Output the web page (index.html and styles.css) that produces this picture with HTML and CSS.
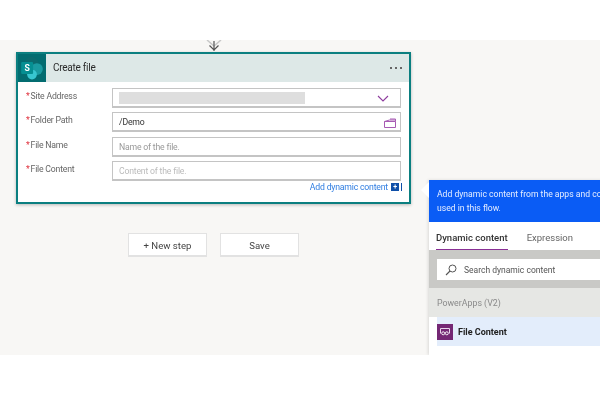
FILE: index.html
```html
<!DOCTYPE html>
<html lang="en">
<head>
<meta charset="utf-8">
<title>Create file</title>
<link rel="stylesheet" href="styles.css">
</head>
<body>
<div class="canvas">
  <svg class="connector" width="16" height="12" viewBox="0 0 16 12"><path d="M1 0l7 6 7-6" fill="none" stroke="#c8c8c8" stroke-width="1.5"/><path d="M8 1v10M3.500 5.500L8 10l4.500-4.500" fill="none" stroke="#555" stroke-width="1.200"/></svg>
  <section class="card">
    <header class="card-head">
      <div class="logo-box">
        <svg width="26" height="26" viewBox="0 0 24 24"><circle cx="11.500" cy="8" r="6.500" fill="#0b6a6e"/><circle cx="16.500" cy="13" r="5.500" fill="#1a9ba1"/><circle cx="12" cy="18" r="4.500" fill="#37c6d0"/><rect x="2" y="6.500" width="11" height="11" rx="1" fill="#058f92"/><text x="7.500" y="15" class="logo-s">S</text></svg>
      </div>
      <div class="card-title">Create file</div>
      <div class="dots"><i></i><i></i><i></i></div>
    </header>
    <div class="form">
      <div class="row">
        <label class="lbl"><b>*</b>Site Address</label>
        <div class="field"><span class="redact"></span>
          <svg class="ico ico-chev" width="12" height="7" viewBox="0 0 12 7"><path d="M1 1l5 5 5-5" fill="none" stroke="#8e3c9e" stroke-width="1.100"/></svg>
        </div>
      </div>
      <div class="row">
        <label class="lbl"><b>*</b>Folder Path</label>
        <div class="field val">/Demo
          <svg class="ico" width="12" height="10" viewBox="0 0 12 10"><path d="M.5 3.500h11v6H.5zM.5 3.500l5-1.500h6v1.500M11.500 2V1H6" fill="none" stroke="#a75bb3" stroke-width="1"/></svg>
        </div>
      </div>
      <div class="row">
        <label class="lbl"><b>*</b>File Name</label>
        <div class="field ph">Name of the file.</div>
      </div>
      <div class="row">
        <label class="lbl"><b>*</b>File Content</label>
        <div class="field ph light">Content of the file.</div>
      </div>
      <div class="add-row">Add dynamic content <span class="plus">+</span></div>
    </div>
  </section>
  <div class="actions">
    <button class="btn">+ New step</button>
    <button class="btn">Save</button>
  </div>
  <aside class="panel">
    <span class="beak"></span>
    <div class="panel-blue">Add dynamic content from the apps and connectors<br>used in this flow.</div>
    <div class="tabs"><span class="tab on">Dynamic content</span><span class="tab">Expression</span></div>
    <div class="search-wrap">
      <div class="search">
        <svg width="12" height="12" viewBox="0 0 12 12"><circle cx="7.500" cy="4.500" r="3.500" fill="none" stroke="#555" stroke-width="1"/><path d="M5 7l-4 4" stroke="#555" stroke-width="1.100"/></svg>
        <span>Search dynamic content</span>
      </div>
    </div>
    <div class="group">PowerApps (V2)</div>
    <div class="item">
      <span class="pa"><svg width="12" height="9" viewBox="0 0 12 9"><path d="M1.500 6.500V1.500h9v5" fill="none" stroke="#e7d3ea" stroke-width="1"/><circle cx="4.200" cy="6.300" r="1.500" fill="none" stroke="#fff" stroke-width=".9"/><circle cx="7.800" cy="6.300" r="1.500" fill="none" stroke="#fff" stroke-width=".9"/></svg></span>
      <span class="item-name">File Content</span>
    </div>
  </aside>
</div>
</body>
</html>
```

FILE: styles.css
```css
html, body { margin: 0; padding: 0; background: #fff; }
body { width: 600px; height: 400px; overflow: hidden; font-family: Roboto, "Open Sans", sans-serif; filter: blur(.35px); }
.canvas { position: relative; height: 315px; margin-top: 40px; background: #f8f7f5; padding: 12px 0 0 16px; box-sizing: border-box; overflow: hidden; }
.connector { position: absolute; left: 206px; top: 0; }
.card { width: 395px; height: 152px; box-sizing: border-box; border: 2px solid #0b7f80; background: #fff; box-shadow: 0 1px 3px rgba(0,0,0,.25); }
.card-head { display: flex; align-items: center; height: 28px; background: #dde8e7; }
.logo-box { width: 28px; height: 28px; background: #036c70; display: flex; align-items: center; justify-content: center; }
.logo-s { font: 700 8px Roboto, sans-serif; fill: #fff; text-anchor: middle; }
.card-title { margin: -1px 0 0 7px; font-size: 10px; letter-spacing: -.25px; color: #2b2b2b; flex: 1; }
.dots { display: flex; gap: 3px; margin-right: 7px; }
.dots i { width: 2px; height: 2px; background: #666; }
.form { padding: 6px 8px 0 8px; }
.row { display: flex; height: 20px; margin-bottom: 4.330px; }
.lbl { width: 86px; margin-top: 1px; font-size: 8.700px; letter-spacing: -.2px; line-height: 14px; color: #666; }
.lbl b { color: #e0303c; font-weight: 400; margin-right: 1px; }
.field { flex: 1; position: relative; box-sizing: border-box; height: 20px; border: 1px solid #c4c4c4; border-bottom-width: 2px; background: #fff; padding: 1px 0 0 6px; font-size: 8.700px; letter-spacing: -.2px; display: flex; align-items: center; }
.val { color: #333; }
.ph { color: #999; }
.light { color: #bbb; }
.redact { width: 186px; height: 12px; background: #dedede; }
.ico { position: absolute; right: 4px; top: 5px; }
.ico-chev { right: 11px; top: 6px; }
.add-row { display: flex; justify-content: flex-end; align-items: center; margin-top: -4px; font-size: 8.700px; letter-spacing: -.2px; color: #2f7de1; line-height: 12px; }
.plus { width: 8px; height: 8px; margin-left: 3px; background: #0f4fa8; border-right: 2px solid #fff; box-shadow: 1px 0 0 #0f4fa8; color: #fff; font-size: 7px; line-height: 8px; text-align: center; font-weight: 700; }
.actions { display: flex; gap: 13px; margin: 29px 0 0 112px; }
.btn { width: 79px; height: 24px; padding: 1px 0 0; box-sizing: border-box; background: #fff; border: 1px solid #e2e2e2; border-bottom-width: 2px; font: 9.600px Roboto, sans-serif; color: #444; }
.panel { position: absolute; left: 429px; top: 140px; width: 180px; height: 175px; background: #fff; box-shadow: -1px 0 3px rgba(0,0,0,.12); }
.beak { position: absolute; left: -8px; top: 2px; border: 8px solid transparent; border-left-width: 0; border-right-color: #fff; }
.panel-blue { height: 42px; box-sizing: border-box; padding: 7px 0 0 8px; background: #0a5cf5; color: #e6eeff; font-size: 8.600px; line-height: 14px; white-space: nowrap; overflow: hidden; }
.tabs { display: flex; gap: 19px; height: 28px; padding-left: 7px; box-sizing: border-box; }
.tab { font-size: 9.500px; line-height: 31px; color: #666; height: 28px; box-sizing: border-box; }
.tab.on { color: #333; border-bottom: 1.500px solid #8a2f96; font-weight: 500; }
.search-wrap { height: 38px; background: #c9c9c6; box-sizing: border-box; padding: 9px 0 0 8px; }
.search { height: 21px; background: #fff; display: flex; align-items: center; gap: 7px; padding-left: 8px; font-size: 8.500px; color: #555; }
.group { height: 29px; background: #e6e7e4; padding-left: 8px; font-size: 8.800px; line-height: 30px; color: #8a8a8a; }
.item { display: flex; align-items: center; height: 29px; margin-left: 8px; background: #e3edfb; gap: 5px; }
.pa { width: 16px; height: 16px; background: #742774; display: flex; align-items: center; justify-content: center; }
.item-name { font-size: 9px; font-weight: 700; color: #222; }
```
